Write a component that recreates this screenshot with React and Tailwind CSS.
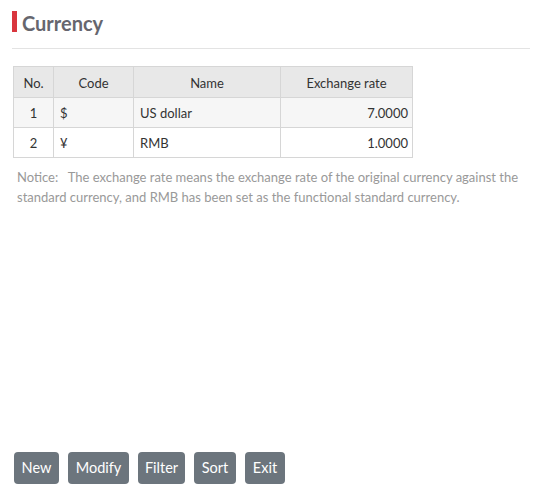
export default function App() {
  const font = { fontFamily: 'Lato, "Open Sans", sans-serif' };
  const cell = "border border-[#d6d6d6] pt-[3px]";
  const buttons = [
    ["New", "w-[45px]"],
    ["Modify", "w-[61px]"],
    ["Filter", "w-[47px]"],
    ["Sort", "w-[42px]"],
    ["Exit", "w-[40px]"],
  ];
  return (
    <div className="h-[491px] flex flex-col justify-between bg-white" style={font}>
      <div>
        <div className="pt-[11px] px-[12px]">
          <div className="border-l-[5px] border-[#d9363e] pl-[5px] h-[21px] flex items-center">
            <span className="text-[20px] font-bold text-[#66666e] leading-none pt-[2px]">Currency</span>
          </div>
          <div className="mt-[16px] h-px bg-[#e3e3e3] w-[518px]" />
        </div>
        <div className="pl-[13px] mt-[17px]">
          <table className="border-collapse text-[13px] text-[#333]">
            <thead>
              <tr className="bg-[#e8e8e8] h-[31px]">
                <th className={`font-normal w-[40px] text-center ${cell}`}>No.</th>
                <th className={`font-normal w-[80px] text-center ${cell}`}>Code</th>
                <th className={`font-normal w-[147px] text-center ${cell}`}>Name</th>
                <th className={`font-normal w-[132px] text-center ${cell}`}>Exchange rate</th>
              </tr>
            </thead>
            <tbody>
              <tr className="bg-[#f6f6f6] h-[30px]">
                <td className={`text-center ${cell}`}>1</td>
                <td className={`px-[6px] ${cell}`}>$</td>
                <td className={`px-[6px] ${cell}`}>US dollar</td>
                <td className={`px-[4px] text-right ${cell}`}>7.0000</td>
              </tr>
              <tr className="bg-white h-[30px]">
                <td className={`text-center ${cell}`}>2</td>
                <td className={`px-[6px] ${cell}`}>¥</td>
                <td className={`px-[6px] ${cell}`}>RMB</td>
                <td className={`px-[4px] text-right ${cell}`}>1.0000</td>
              </tr>
            </tbody>
          </table>
          <p className="mt-[9px] pl-[4px] pr-[12px] text-[13px] leading-[20px] text-[#999]">
            Notice:&nbsp;&nbsp; The exchange rate means the exchange rate of the original currency against the standard currency, and RMB has been set as the functional standard currency.
          </p>
        </div>
      </div>
      <div className="flex gap-[9px] pl-[14px] pb-[7px]">
        {buttons.map(([b, w]) => (
          <button key={b} className={`h-[32px] ${w} rounded-[4px] bg-[#6c757d] text-white text-[14.5px]`}>
            {b}
          </button>
        ))}
      </div>
    </div>
  );
}
